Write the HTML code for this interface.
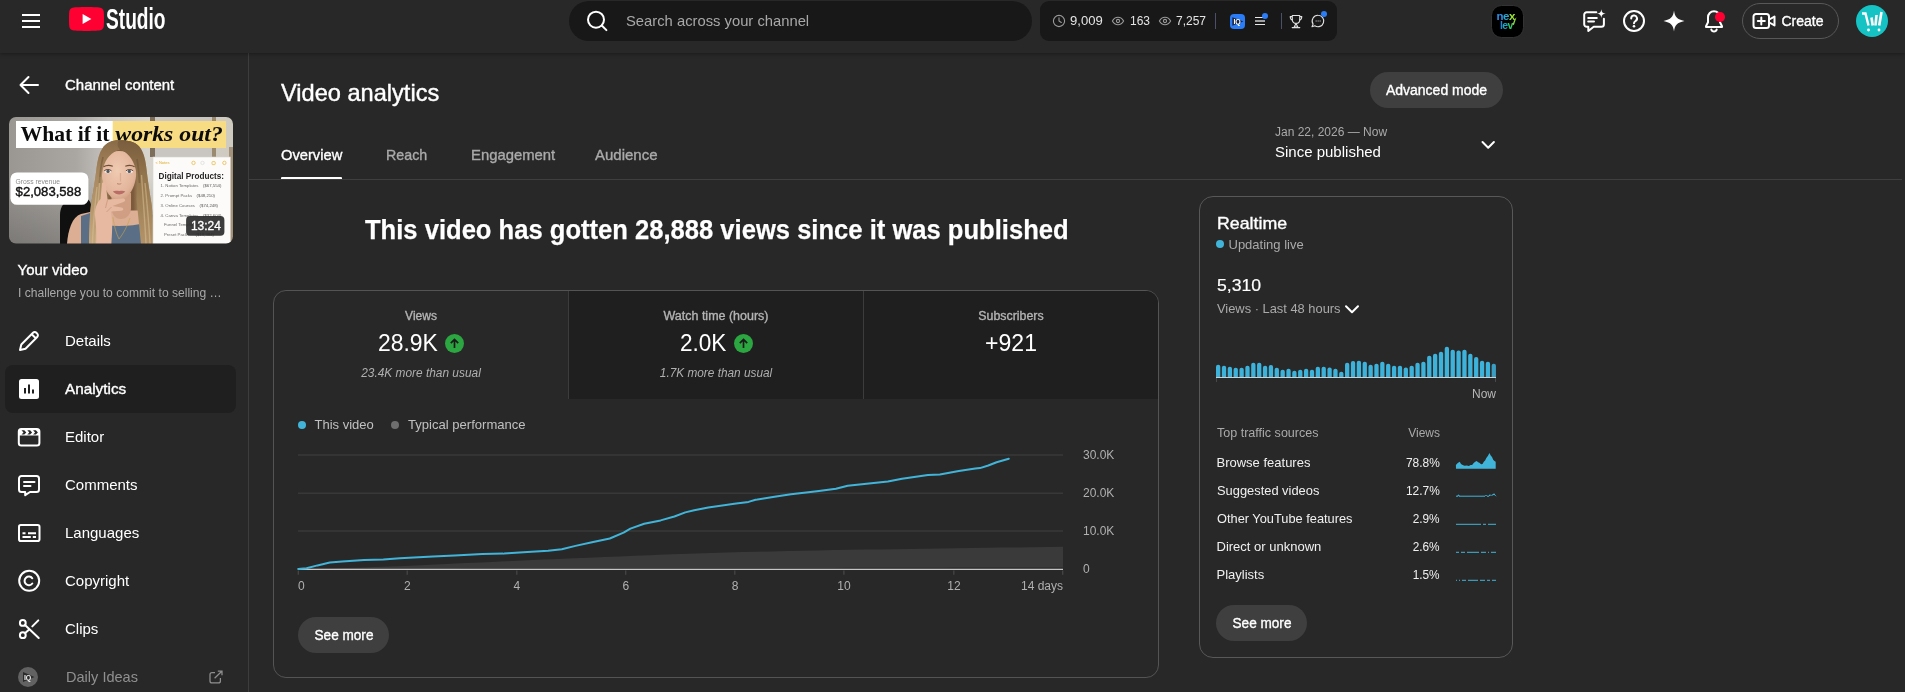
<!DOCTYPE html>
<html lang="en">
<head>
<meta charset="utf-8">
<title>Video analytics - YouTube Studio</title>
<style>
*{box-sizing:border-box;margin:0;padding:0}
html,body{width:1905px;height:692px;overflow:hidden;background:#282828}
body{position:relative;font-family:"Liberation Sans",sans-serif;color:#fff;font-size:15px}
.a{position:absolute}
.t{position:absolute;white-space:nowrap;line-height:1;transform-origin:0 50%;transform:translateY(-50%) scaleX(var(--s,1))}
.r{transform-origin:100% 50%}
.c{transform-origin:50% 50%;transform:translate(-50%,-50%) scaleX(var(--s,1))}
.m{-webkit-text-stroke:.35px currentColor}
.g{color:#aaa}
svg{position:absolute;overflow:visible}
.ic{fill:none;stroke:#fff;stroke-width:2;stroke-linecap:round;stroke-linejoin:round}
/* header */
#hdr{left:0;top:0;width:1905px;height:53px;background:#282828;box-shadow:0 1px 4px rgba(0,0,0,.35);z-index:5}
#search{left:569px;top:1px;width:463px;height:40px;border-radius:20px;background:#181818}
#stats{left:1040px;top:1px;width:297px;height:40px;border-radius:9px;background:#181818}
#create{left:1742px;top:3px;width:97px;height:36px;border-radius:18px;border:1px solid #585858}
#avatar{left:1856px;top:5px;width:32px;height:32px;border-radius:50%;background:#15c2c4}
#nex{left:1490.500px;top:4.500px;width:33px;height:33px;border-radius:10.500px;background:#000;border:1px solid #333}
/* sidebar */
#side{left:0;top:53px;width:249px;height:639px;border-right:1px solid #3d3d3d}
#sel{left:5px;top:365px;width:231px;height:48px;border-radius:8px;background:#1f1f1f}
#thumb{left:9px;top:117px;width:224px;height:126px;border-radius:7px;overflow:hidden;background:#cfcbc6}
/* main */
#divider{left:249px;top:179px;width:1653px;height:1px;background:#3f3f3f}
#uline{left:281px;top:177px;width:61px;height:3px;background:#fff;border-radius:1px}
.pill{position:absolute;height:36px;border-radius:18px;background:#3f3f3f}
#card{left:273px;top:290px;width:886px;height:388px;border:1px solid #545454;border-radius:13px;overflow:hidden}
#rt{left:1199px;top:196px;width:314px;height:462px;border:1px solid #585858;border-radius:14px}
.mt{position:absolute;top:0;height:108px;background:#1f1f1f;border-left:1px solid #3c3c3c}
.dot{position:absolute;width:8px;height:8px;border-radius:50%}
.up{position:absolute;width:19px;height:19px;border-radius:50%;background:#2ba640}
</style>
</head>
<body>
<div id="root" style="position:absolute;left:0;top:0;width:1905px;height:692px;will-change:transform">

<!-- ================= HEADER ================= -->
<div id="hdr" class="a">
  <!-- hamburger -->
  <div class="a" style="left:22px;top:14px;width:18px;height:2px;background:#fff"></div>
  <div class="a" style="left:22px;top:20px;width:18px;height:2px;background:#fff"></div>
  <div class="a" style="left:22px;top:26px;width:18px;height:2px;background:#fff"></div>
  <!-- logo -->
  <svg style="left:69px;top:7px" width="35" height="24" viewBox="0 0 35 24">
    <path d="M17.5 0C10 0 4.6.3 2.9.9 1.6 1.4.7 2.5.4 3.9 0 6 0 9.5 0 12s0 6 .4 8.100c.3 1.4 1.200 2.500 2.500 3C4.600 23.700 10 24 17.500 24s12.900-.3 14.600-.9c1.300-.5 2.200-1.600 2.500-3 .4-2.100.4-5.600.4-8.100s0-6-.4-8.100c-.3-1.400-1.200-2.500-2.500-3C30.400.3 25 0 17.500 0z" fill="#ff0033"/>
    <path d="M13.600 7v10l8.800-5z" fill="#fff"/>
  </svg>
  <div class="t" style="left:106px;top:19px;font-size:29px;font-weight:bold;--s:.66">Studio</div>
  <!-- search -->
  <div id="search" class="a"></div>
  <svg style="left:584px;top:8px" width="24" height="24" viewBox="0 0 24 24"><circle class="ic" cx="12" cy="11.700" r="8"/><path class="ic" d="M17.800 17.500l4.600 4.600"/></svg>
  <div class="t" style="left:626px;top:19.500px;font-size:15px;color:#a8a8a8;--s:.985">Search across your channel</div>
  <!-- vidIQ stats -->
  <div id="stats" class="a"></div>
  <svg style="left:1052px;top:14px" width="14" height="14" viewBox="0 0 14 14"><circle cx="7" cy="7" r="5.600" fill="none" stroke="#9a9a9a" stroke-width="1.100"/><path d="M7 3.800V7l2.300 1.500" fill="none" stroke="#9a9a9a" stroke-width="1.100" stroke-linecap="round"/></svg>
  <div class="t" style="left:1070px;top:20.500px;font-size:12px;color:#e4e4e4;--s:1.09">9,009</div>
  <svg style="left:1111px;top:15px" width="14" height="12" viewBox="0 0 14 12"><path d="M1.400 6C2.700 3.600 4.700 2.300 7 2.300S11.300 3.600 12.600 6C11.300 8.400 9.300 9.700 7 9.700S2.700 8.400 1.400 6z" fill="none" stroke="#9a9a9a" stroke-width="1.100"/><circle cx="7" cy="6" r="1.600" fill="none" stroke="#9a9a9a" stroke-width="1.100"/></svg>
  <div class="t" style="left:1130px;top:20.500px;font-size:12px;color:#e4e4e4">163</div>
  <svg style="left:1158px;top:15px" width="14" height="12" viewBox="0 0 14 12"><path d="M1.400 6C2.700 3.600 4.700 2.300 7 2.300S11.300 3.600 12.600 6C11.300 8.400 9.300 9.700 7 9.700S2.700 8.400 1.400 6z" fill="none" stroke="#9a9a9a" stroke-width="1.100"/><circle cx="7" cy="6" r="1.600" fill="none" stroke="#9a9a9a" stroke-width="1.100"/></svg>
  <div class="t" style="left:1176px;top:20.500px;font-size:12px;color:#e4e4e4">7,257</div>
  <div class="a" style="left:1215px;top:13px;width:1px;height:16px;background:#4a5068"></div>
  <div class="a" style="left:1230px;top:14px;width:15px;height:15px;border-radius:4px;background:#2b7cf7"></div>
  <svg style="left:1230px;top:14px" width="15" height="15" viewBox="0 0 15 15"><path d="M2.300 3.200v8.600L13.400 7.500z" fill="#1c2540"/></svg>
  <div class="t" style="left:1233.500px;top:21.300px;font-size:7px;font-weight:bold;letter-spacing:-.3px">IQ</div>
  <div class="a" style="left:1255px;top:17px;width:10px;height:1px;background:#e8e8e8"></div>
  <div class="a" style="left:1255px;top:20px;width:10px;height:2px;background:#a0a0a0"></div>
  <div class="a" style="left:1255px;top:24px;width:10px;height:1px;background:#e8e8e8"></div>
  <div class="dot" style="left:1262px;top:13px;width:6px;height:6px;background:#2b7cf7"></div>
  <div class="a" style="left:1281px;top:13px;width:1px;height:16px;background:#4a5068"></div>
  <!-- trophy -->
  <svg style="left:1289px;top:14px" width="14" height="15" viewBox="0 0 14 15"><path d="M3.300 1.500h7.400v4.200c0 2.100-1.600 3.700-3.700 3.700S3.300 7.800 3.300 5.700z M3.300 2.600H1.200c0 2.100.7 3.300 2.300 3.600 M10.700 2.600h2.100c0 2.100-.7 3.300-2.300 3.600 M7 9.400l-1.800 3.700h3.600z M3.200 13.600h7.600" fill="none" stroke="#e0e0e0" stroke-width="1.100" stroke-linejoin="round" stroke-linecap="round"/></svg>
  <!-- chat -->
  <svg style="left:1310px;top:13px" width="16" height="16" viewBox="0 0 16 16"><path d="M8.100 2.300a5.700 5.700 0 1 1-3.300 10.400L2 13.700l1.100-2.600A5.700 5.700 0 0 1 8.100 2.300z" fill="none" stroke="#e0e0e0" stroke-width="1.100" stroke-linejoin="round"/><path d="M5.600 8h1.100M7.600 8h1.100M9.600 8h1.100" stroke="#c8c8c8" stroke-width="1.200"/></svg>
  <div class="dot" style="left:1321px;top:11px;width:6px;height:6px;background:#2b7cf7"></div>
  <!-- nexlev -->
  <div id="nex" class="a"></div>
  <div class="t" style="left:1496.500px;top:17px;font-size:11.500px;font-weight:bold;letter-spacing:-.5px;color:#2f8fe6">n<span style="color:#2aa8d0">e</span><span style="color:#9be33a">x</span></div>
  <div class="t" style="left:1500px;top:24.500px;font-size:10.500px;font-weight:bold;letter-spacing:-.6px;color:#2a86d8">l<span style="color:#18a9c9">e</span><span style="color:#35c56a">v</span></div>
  <svg style="left:1491px;top:5px" width="32" height="32" viewBox="0 0 32 32"><path d="M21.500 19.500l2-5 2-2.300-2.600 7.800z" fill="#8fdc3c"/></svg>
  <!-- feedback bubble w/ sparkle -->
  <svg style="left:1581px;top:8px" width="24" height="24" viewBox="0 0 24 24"><path class="ic" d="M15.300 4.300H5.700A2.500 2.500 0 0 0 3.200 6.800v9.400a2.500 2.500 0 0 0 2.500 2.500h1.600v4.300l5.400-4.300h7.700a2.500 2.500 0 0 0 2.500-2.500V10.800"/><path class="ic" d="M7.200 9.900h8.600M7.200 13.600h5.800"/><path d="M20.300 1.200c.4 3 1.400 4 4.400 4.400-3 .4-4 1.400-4.400 4.400-.4-3-1.400-4-4.400-4.400 3-.4 4-1.400 4.400-4.400z" fill="#fff"/></svg>
  <!-- help -->
  <svg style="left:1622px;top:9px" width="24" height="24" viewBox="0 0 24 24"><circle class="ic" cx="12" cy="12" r="10"/><path class="ic" d="M9.200 9.500a2.900 2.900 0 1 1 4.300 2.500c-.9.600-1.500 1.100-1.500 2.300"/><circle cx="12" cy="17.300" r="1.300" fill="#fff"/></svg>
  <!-- sparkle -->
  <svg style="left:1663px;top:10px" width="22" height="22" viewBox="0 0 22 22"><path d="M11 .5c.9 6.600 3 8.700 10.500 10.500C14 12.800 11.900 14.900 11 21.500 10.100 14.900 8 12.800.5 11 8 9.200 10.100 7.100 11 .5z" fill="#fff"/></svg>
  <!-- bell -->
  <svg style="left:1702px;top:9px" width="24" height="24" viewBox="0 0 24 24"><path class="ic" d="M12 2.200c-3.400 0-6 2.700-6 6.100v4.900l-2 4v.8h16v-.8l-2-4V8.300c0-3.400-2.600-6.100-6-6.100z"/><path class="ic" d="M9.300 20.500a2.800 2.800 0 0 0 5.400 0"/></svg>
  <div class="dot" style="left:1715px;top:12px;width:9.500px;height:9.500px;background:#ff0033"></div>
  <!-- create -->
  <div id="create" class="a"></div>
  <svg style="left:1752px;top:9px" width="24" height="24" viewBox="0 0 24 24"><path class="ic" d="M4 5h10.500A2.500 2.500 0 0 1 17 7.500v9a2.500 2.500 0 0 1-2.500 2.500H4a2.500 2.500 0 0 1-2.500-2.500v-9A2.500 2.500 0 0 1 4 5z"/><path class="ic" d="M17.300 10.500L22.500 7.500v9l-5.200-3"/><path class="ic" d="M9.300 8.500v7M5.800 12h7"/></svg>
  <div class="t m" style="left:1781.500px;top:21px;font-size:14px;--s:1">Create</div>
  <!-- avatar -->
  <div id="avatar" class="a"></div>
  <svg style="left:1856px;top:5px" width="32" height="32" viewBox="0 0 32 32"><path d="M6 8.500h3.500l3 12" fill="none" stroke="#fff" stroke-width="2.400"/><path d="M15.500 12.500l1.200 8M20.500 10l-1 10.500M25.500 7l-2.300 13.500" stroke="#fff" stroke-width="2.600" fill="none"/><circle cx="12.500" cy="25" r="1.400" fill="#fff"/><circle cx="23" cy="25" r="1.400" fill="#fff"/></svg>
</div>

<!-- ================= SIDEBAR ================= -->
<div id="side" class="a"></div>
<svg style="left:0;top:0" width="60" height="100" viewBox="0 0 60 100"><path class="ic" d="M38 85H20.500M28.500 77l-8 8 8 8"/></svg>
<div class="t m" style="left:65px;top:84px;font-size:15px">Channel content</div>

<!-- thumbnail -->
<svg style="left:9px;top:117px" width="224" height="127" viewBox="0 0 224 127">
  <defs>
    <clipPath id="tc"><rect x="0" y="0" width="224" height="126.500" rx="7"/></clipPath>
    <linearGradient id="bgw" x1="0" x2="1" y1="0" y2="0"><stop offset="0" stop-color="#9a9793"/><stop offset=".3" stop-color="#aaa7a2"/><stop offset=".44" stop-color="#c6c3be"/><stop offset=".62" stop-color="#d7d4ce"/><stop offset="1" stop-color="#cfcac0"/></linearGradient>
    <linearGradient id="bgd" x1="0" x2="0" y1="0" y2="1"><stop offset="0" stop-color="#000" stop-opacity="0"/><stop offset="1" stop-color="#000" stop-opacity=".2"/></linearGradient>
    <linearGradient id="hair" x1="0" x2="1" y1="0" y2="0"><stop offset="0" stop-color="#8a6c4a"/><stop offset=".18" stop-color="#c4a67c"/><stop offset=".32" stop-color="#80613f"/><stop offset=".68" stop-color="#7a5a3a"/><stop offset=".85" stop-color="#c9ab82"/><stop offset="1" stop-color="#9a7a55"/></linearGradient>
    <linearGradient id="hl" x1="0" x2="0" y1="0" y2="1"><stop offset="0" stop-color="#8a6b48"/><stop offset=".35" stop-color="#a98a60"/><stop offset="1" stop-color="#c6a87e"/></linearGradient>
    <linearGradient id="hr" x1="0" x2="0" y1="0" y2="1"><stop offset="0" stop-color="#7a5d3d"/><stop offset=".4" stop-color="#96784f"/><stop offset="1" stop-color="#b3946a"/></linearGradient>
    <radialGradient id="fsh" cx=".45" cy=".4" r=".7"><stop offset="0" stop-color="#f0cab2"/><stop offset=".7" stop-color="#e2b59b"/><stop offset="1" stop-color="#c99679"/></radialGradient>
    <linearGradient id="skin" x1="0" x2="1" y1="0" y2="0"><stop offset="0" stop-color="#d9a98e"/><stop offset=".5" stop-color="#ecc4ab"/><stop offset="1" stop-color="#d7a78c"/></linearGradient>
  </defs>
  <g clip-path="url(#tc)">
    <rect width="224" height="127" fill="url(#bgw)"/>
    <rect x="0" y="60" width="150" height="67" fill="url(#bgd)"/>
    <rect x="141" y="0" width="5" height="40" fill="#7d6e5c"/>
    <rect x="146" y="0" width="60" height="40" fill="#c9c6c2"/>
    <rect x="203" y="0" width="4" height="40" fill="#9a8a72"/>
    <rect x="220" y="30" width="4" height="97" fill="#a3917a"/>
    <!-- banner -->
    <rect x="7" y="4" width="97" height="27" fill="#fff"/>
    <rect x="103.700" y="4" width="113.300" height="27" fill="#f8dc84"/>
    <g font-family="Liberation Serif, serif" font-size="22" font-weight="bold" fill="#0c0c0c">
      <text x="11.600" y="23.500" textLength="89" lengthAdjust="spacingAndGlyphs">What if it</text>
      <text x="106.300" y="23.500" textLength="107.500" lengthAdjust="spacingAndGlyphs" font-style="italic">works out?</text>
    </g>
    <!-- chair -->
    <path d="M51 127V98c0-9 5-15 13-16h12c4 0 6 3 6 7v38z" fill="#101010"/>
    <!-- hair back -->
    <path d="M110 23.300c-7 0-13 2.500-16.500 8-3.500 5-5 12-6 20-1 9-3 22-5 33-1.600 10-2.500 25-2.500 42.700h65c0-17-1.200-31-2.800-42-1.700-11-3.700-24-4.700-33-1-9-2.500-15.500-6-20.700-3.500-5.500-9.500-8-21.500-8z" fill="url(#hair)"/>
    <!-- shoulders -->
    <path d="M58 127c1-14 5-27 14-30l16-3.500h44l15 4c8 3 11.500 14 12.500 29.500z" fill="#dcae93"/>
    <!-- dress -->
    <path d="M72 127V99l9-3 3 10c8 2 16 3 26 3s18-1 26-3l3-10 8.500 3V127z" fill="#5a6f86"/>
    <!-- neck -->
    <path d="M102.500 76h19.500v15c0 6-4 11-10 11s-9.500-5-9.500-11z" fill="#d09e83"/>
    <!-- face -->
    <path d="M110 34C99 34 93 42 92.700 54c-.2 10 3.300 20 9.300 26 4 3.500 12 3.500 16 0 6-6 9.500-16 9.300-26C127 42 121 34 110 34z" fill="url(#fsh)"/>
    <!-- hair front strands -->
    <path d="M111 32.500c-8 2-14.500 9-17 19-1.800 8-1.500 19-.5 30.500l-4 45h-9.500c0-17.700.9-32.700 2.500-42.700 2-11 4-24 5-33 1-8 2.500-15 6-20 3.500-5.500 9.500-8 16.500-8 3 2 3 6 1 9.200z" fill="url(#hl)"/>
    <path d="M111 32.500c7 2.500 13 9 15.500 19 2 8 2 19 1 30.500l4.500 45h13c0-17-1.200-31-2.800-42-1.700-11-3.700-24-4.700-33-1-9-2.500-15.500-6-20.700-3.500-5.500-9.500-8-21.500-8 -2 3-2 6.500 1 9.200z" fill="url(#hr)"/>
    <path d="M88 70c-2 18-4 36-4.500 57M91 60c-1.500 22-3.500 44-4 67M136 66c2 20 4 40 5 61M132.500 58c1.500 24 3.500 46 4.500 69" stroke="#d8bd94" stroke-width="1.400" fill="none" opacity=".55"/>
    <path d="M94 40c-2 8-3 16-3.500 26M128 42c1.500 8 2 15 2.500 24" stroke="#6a4f35" stroke-width="1.600" fill="none" opacity=".5"/>
    <!-- brows / eyes / nose / lips -->
    <path d="M94.500 49.800c2.500-1.600 6-1.900 9.300-.6M116.300 49.200c3.300-1.300 6.800-1 9.300.6" stroke="#6d4f37" stroke-width="1.200" fill="none"/>
    <ellipse cx="98.800" cy="54.500" rx="3.500" ry="1.700" fill="#f2e6de"/>
    <ellipse cx="120.500" cy="54.500" rx="3.500" ry="1.700" fill="#f2e6de"/>
    <circle cx="99" cy="54.400" r="1.600" fill="#4a5a66"/>
    <circle cx="120.300" cy="54.400" r="1.600" fill="#4a5a66"/>
    <path d="M95.200 53.800c2-1.700 5.300-1.700 7.300 0M116.900 53.800c2-1.700 5.300-1.700 7.300 0" stroke="#4a372b" stroke-width=".9" fill="none"/>
    <path d="M111.500 56v8.500" stroke="#cf9c82" stroke-width="1.200" fill="none" opacity=".6"/>
    <path d="M108 66.500c1 .8 3.300.8 4.300 0" stroke="#b98268" stroke-width="1" fill="none"/>
    <path d="M103.800 74.600c2.200-1.200 4.300-.6 6.300-.6s4.100-.6 6.300.6c-2 2-4.100 2.800-6.300 2.800s-4.300-.8-6.300-2.800z" fill="#b86e66"/>
    <!-- hand -->
    <path d="M93 66c1.500-1.500 3.500-.5 3.800 1.500l1.700 15 15-1c3-.2 3.600 2.500 1 3.500l-11 4 9 1.500c2.500.5 2.300 3-.2 3.200l-10.500.8c2 9 1.500 20 .5 33.500H87c1-10 0-20-1-29-.8-7 2-13 5.500-17z" fill="#e6b9a0"/>
    <path d="M98.500 83l-2 8M102.500 90l-5 5" stroke="#c99277" stroke-width=".7" fill="none"/>
    <!-- necklace -->
    <path d="M104 100c1 9 3 16 6 22 4-5 8-12 11-21" stroke="#c9a24e" stroke-width=".6" fill="none"/>
    <!-- revenue chip -->
    <rect x="1.400" y="55.400" width="78" height="32.400" rx="6.500" fill="#fff"/>
    <text x="6.600" y="67.300" font-family="Liberation Sans, sans-serif" font-size="6.600" fill="#8c8c8c" textLength="44.300" lengthAdjust="spacingAndGlyphs">Gross revenue</text>
    <text x="6.600" y="79.200" font-family="Liberation Sans, sans-serif" font-size="13" fill="#111" stroke="#111" stroke-width=".4" textLength="65.600" lengthAdjust="spacingAndGlyphs">$2,083,588</text>
    <!-- notes card -->
    <rect x="144" y="40" width="77.400" height="87" fill="#fcfbf9"/>
    <rect x="144" y="40" width="77.400" height="87" fill="none" stroke="#d8d4cc" stroke-width=".6"/>
    <g font-family="Liberation Sans, sans-serif">
      <text x="146.500" y="47.300" font-size="4" fill="#e0ab25">&lt; Notes</text>
      <g fill="none" stroke="#e6b432" stroke-width=".7"><circle cx="184.500" cy="45.900" r="1.700"/><circle cx="193.500" cy="45.900" r="1.700" stroke="#d8d8d8"/><rect x="203" y="44.600" width="3.200" height="3" rx=".6"/><circle cx="215.400" cy="45.900" r="1.700"/></g>
      <text x="149.600" y="61.800" font-size="8.700" font-weight="bold" fill="#262626" textLength="65.400" lengthAdjust="spacingAndGlyphs">Digital Products:</text>
      <g font-size="4.300" fill="#6a6a6a">
        <text x="151.600" y="70.300">1. Notion Templates</text><text x="212.400" y="70.300" text-anchor="end" fill="#555">($67,554)</text>
        <text x="151.600" y="79.900">2. Prompt Packs</text><text x="206" y="79.900" text-anchor="end" fill="#555">($48,210)</text>
        <text x="151.600" y="89.900">3. Online Courses</text><text x="209" y="89.900" text-anchor="end" fill="#555">($74,248)</text>
        <text x="151.600" y="99.600">4. Canva Templates</text><text x="212.400" y="99.600" text-anchor="end" fill="#555">($32,604)</text>
        <text x="155" y="109.200">Funnel Templates</text>
        <text x="155" y="118.600">Preset Packs</text><text x="205" y="118.600" text-anchor="end" fill="#555">($19,384)</text>
      </g>
    </g>
    <!-- duration -->
    <rect x="177.100" y="99.100" width="38.300" height="19.600" rx="4" fill="#2b2b2b" fill-opacity=".92"/>
    <text x="181.900" y="113.400" font-family="Liberation Sans, sans-serif" font-size="12" fill="#fff" stroke="#fff" stroke-width=".3" textLength="29.900" lengthAdjust="spacingAndGlyphs">13:24</text>
  </g>
</svg>

<div class="t m" style="left:17.500px;top:269px;font-size:15px">Your video</div>
<div class="t g" style="left:17.500px;top:292.500px;font-size:12px;--s:1.008">I challenge you to commit to selling …</div>
<div id="sel" class="a"></div>

<!-- nav icons -->
<svg style="left:17px;top:329px" width="24" height="24" viewBox="0 0 24 24"><path class="ic" d="M3 21l1.300-5.500L16 3.800a2.400 2.400 0 0 1 3.400 0l.8.800a2.400 2.400 0 0 1 0 3.400L8.500 19.700z M14.700 5.200l4.100 4.100"/></svg>
<svg style="left:17px;top:377px" width="24" height="24" viewBox="0 0 24 24"><rect x="2" y="2" width="20" height="20" rx="2.500" fill="#fff"/><path d="M8 11v5.500M12 7.500v9M16 12.500v4" stroke="#1f1f1f" stroke-width="2" fill="none"/></svg>
<svg style="left:17px;top:425px" width="24" height="24" viewBox="0 0 24 24"><rect class="ic" x="1.800" y="4" width="20.600" height="16.500" rx="2.500"/><path d="M2 4.500h20.200v6H2z" fill="#fff"/><path d="M4.500 5.300l2 2.100-2 2.100h2.800l2-2.100-2-2.100zM10.300 5.300l2 2.100-2 2.100h2.800l2-2.100-2-2.100zM16.100 5.300l2 2.100-2 2.100h2.800l2-2.100-2-2.100z" fill="#282828"/></svg>
<svg style="left:17px;top:473px" width="24" height="24" viewBox="0 0 24 24"><path class="ic" d="M4.500 3h15A2.500 2.500 0 0 1 22 5.500v11a2.500 2.500 0 0 1-2.500 2.500H13l-4.800 3.200V19H4.500A2.500 2.500 0 0 1 2 16.500v-11A2.500 2.500 0 0 1 4.500 3z"/><path class="ic" d="M7 9h10.500M7 13h6.500"/></svg>
<svg style="left:17px;top:521px" width="24" height="24" viewBox="0 0 24 24"><rect class="ic" x="2" y="4" width="20.500" height="16" rx="1.800"/><path d="M5.500 12.200h3M11 12.200h8M5.500 16h8.300M15.800 16h3.200" stroke="#fff" stroke-width="2" fill="none"/></svg>
<svg style="left:17px;top:569px" width="24" height="24" viewBox="0 0 24 24"><circle class="ic" cx="12.200" cy="11.800" r="10"/><path class="ic" d="M15.300 9.300a4.300 4.300 0 1 0 0 5.200"/></svg>
<svg style="left:17px;top:617px" width="24" height="24" viewBox="0 0 24 24"><circle class="ic" cx="5.800" cy="5.900" r="2.900"/><circle class="ic" cx="5.800" cy="18.200" r="2.900"/><path class="ic" d="M8 8l13.700 13M8.200 16.100l4-3.700M15.300 9.400l6-6"/></svg>
<div class="a" style="left:18px;top:667px;width:20px;height:20px;border-radius:50%;background:#626262"></div>
<svg style="left:18px;top:667px" width="20" height="20" viewBox="0 0 20 20"><path d="M5 5v10l11.500-5z" fill="#2a2a2a"/></svg>
<div class="t" style="left:24px;top:677.300px;font-size:7px;font-weight:bold;letter-spacing:-.2px;color:#f0f0f0">IQ</div>
<svg style="left:205px;top:667px" width="20" height="20" viewBox="0 0 20 20"><path d="M10 5.500H7A2 2 0 0 0 5 7.500v6.400a2 2 0 0 0 2 2h6.400a2 2 0 0 0 2-2V11" fill="none" stroke="#8e8e8e" stroke-width="1.250"/><path d="M9.600 11.300L16.800 4.300M12.800 4.100h4.200v4.200" fill="none" stroke="#8e8e8e" stroke-width="1.250"/></svg>

<div class="t" style="left:65px;top:340px">Details</div>
<div class="t m" style="left:65px;top:388px;--s:1.02">Analytics</div>
<div class="t" style="left:65px;top:436px">Editor</div>
<div class="t" style="left:65px;top:484px">Comments</div>
<div class="t" style="left:65px;top:532px">Languages</div>
<div class="t" style="left:65px;top:580px">Copyright</div>
<div class="t" style="left:65px;top:628px">Clips</div>
<div class="t" style="left:66px;top:676px;color:#909090;--s:.97">Daily Ideas</div>

<!-- ================= MAIN ================= -->
<div class="t m" style="left:281px;top:93px;font-size:24px;-webkit-text-stroke:.4px #fff;--s:.983">Video analytics</div>
<div class="t m" style="left:281px;top:153.500px;--s:.98">Overview</div>
<div class="t m g" style="left:386px;top:153.500px;--s:.95">Reach</div>
<div class="t m g" style="left:470.500px;top:153.500px;--s:.99">Engagement</div>
<div class="t m g" style="left:595px;top:153.500px">Audience</div>
<div id="uline" class="a"></div>
<div id="divider" class="a"></div>
<div class="pill" style="left:1370px;top:72px;width:133px"></div>
<div class="t m c" style="left:1436.500px;top:90px;font-size:14px">Advanced mode</div>
<div class="t g" style="left:1275px;top:132px;font-size:12px">Jan 22, 2026 — Now</div>
<div class="t" style="left:1275px;top:151px">Since published</div>
<svg style="left:1476px;top:133px" width="24" height="24" viewBox="0 0 24 24"><path class="ic" d="M6.500 9l5.700 5.700L17.900 9"/></svg>

<div class="t" style="left:364.500px;top:230px;font-size:28px;font-weight:bold;-webkit-text-stroke:.25px #fff;--s:.9135">This video has gotten 28,888 views since it was published</div>

<!-- metrics + chart card -->
<div id="card" class="a">
  <div class="mt" style="left:294px;width:295px"></div>
  <div class="mt" style="left:589px;width:296px"></div>
</div>
<div class="t m c" style="left:421px;top:316px;font-size:12px;color:#b4b4b4">Views</div>
<div class="t" style="left:378px;top:343px;font-size:24px;--s:.955">28.9K</div>
<div class="up" style="left:444.500px;top:333.500px"></div>
<svg style="left:444.500px;top:333.500px" width="19" height="19" viewBox="0 0 19 19"><path d="M9.500 14V5.600M5.800 9.200l3.700-3.700 3.700 3.700" fill="none" stroke="#1a1a1a" stroke-width="1.700"/></svg>
<div class="t c" style="left:421px;top:373px;font-size:12px;font-style:italic;color:#b0b0b0;--s:.99">23.4K more than usual</div>

<div class="t m c" style="left:716px;top:316px;font-size:12px;color:#b4b4b4;--s:1.04">Watch time (hours)</div>
<div class="t" style="left:680px;top:343px;font-size:24px;--s:.94">2.0K</div>
<div class="up" style="left:733.500px;top:333.500px"></div>
<svg style="left:733.500px;top:333.500px" width="19" height="19" viewBox="0 0 19 19"><path d="M9.500 14V5.600M5.800 9.200l3.700-3.700 3.700 3.700" fill="none" stroke="#1a1a1a" stroke-width="1.700"/></svg>
<div class="t c" style="left:716px;top:373px;font-size:12px;font-style:italic;color:#b0b0b0;--s:.985">1.7K more than usual</div>

<div class="t m c" style="left:1011px;top:316px;font-size:12px;color:#b4b4b4;--s:1.03">Subscribers</div>
<div class="t c" style="left:1010.500px;top:343px;font-size:24px;--s:.96">+921</div>

<!-- legend -->
<div class="dot" style="left:298px;top:421px;background:#41b4d9"></div>
<div class="t" style="left:314.500px;top:423.500px;font-size:13px;color:#c0c0c0">This video</div>
<div class="dot" style="left:391px;top:421px;background:#6e6e6e"></div>
<div class="t" style="left:407.500px;top:423.500px;font-size:13px;color:#c0c0c0;--s:1.005">Typical performance</div>

<!-- chart -->
<svg style="left:0;top:0" width="1905" height="692" viewBox="0 0 1905 692" font-family="Liberation Sans, sans-serif" font-size="12" fill="#b0b0b0">
  <path d="M298 455H1063M298 493.200H1063M298 531.100H1063" stroke="#383838" stroke-width="1.500"/>
  <path d="M298.0 569.0 L313.3 568.7 L328.6 568.4 L343.9 568.1 L359.2 567.7 L374.5 567.1 L389.8 566.5 L405.1 565.9 L420.4 565.2 L435.7 564.5 L451.0 563.8 L466.3 563.1 L481.6 562.4 L496.9 561.7 L512.2 560.9 L527.5 560.3 L542.8 559.6 L558.1 558.9 L573.4 558.3 L588.7 557.7 L604.0 557.0 L619.3 556.4 L634.6 555.8 L649.9 555.2 L665.2 554.6 L680.5 554.0 L695.8 553.4 L711.1 553.0 L726.4 552.6 L741.7 552.1 L757.0 551.7 L772.3 551.4 L787.6 551.0 L802.9 550.7 L818.2 550.4 L833.5 550.1 L848.8 549.8 L864.1 549.6 L879.4 549.4 L894.7 549.2 L910.0 548.9 L925.3 548.7 L940.6 548.5 L955.9 548.3 L971.2 548.1 L986.5 547.8 L1001.8 547.6 L1017.1 547.4 L1032.4 547.2 L1047.7 547.0 L1063.0 546.8 L1063.0 567.4 L1047.7 567.4 L1032.4 567.5 L1017.1 567.5 L1001.8 567.5 L986.5 567.6 L971.2 567.6 L955.9 567.6 L940.6 567.7 L925.3 567.7 L910.0 567.7 L894.7 567.8 L879.4 567.8 L864.1 567.8 L848.8 567.8 L833.5 567.9 L818.2 567.9 L802.9 567.9 L787.6 568.0 L772.3 568.0 L757.0 568.0 L741.7 568.1 L726.4 568.1 L711.1 568.1 L695.8 568.2 L680.5 568.2 L665.2 568.2 L649.9 568.3 L634.6 568.3 L619.3 568.3 L604.0 568.4 L588.7 568.4 L573.4 568.4 L558.1 568.5 L542.8 568.5 L527.5 568.5 L512.2 568.6 L496.9 568.6 L481.6 568.6 L466.3 568.6 L451.0 568.7 L435.7 568.7 L420.4 568.7 L405.1 568.8 L389.8 568.8 L374.5 568.8 L359.2 568.9 L343.9 568.9 L328.6 568.9 L313.3 569.0 L298.0 569.0Z" fill="#3a3a3a"/>
  <path d="M298 569.400H1063" stroke="#c6c6c6" stroke-width="1.100"/>
  <path d="M298.300 570.500v4.300M407.200 570.500v4.300M516.800 570.500v4.300M625.700 570.500v4.300M734.800 570.500v4.300M843.900 570.500v4.300M953.800 570.500v4.300M1062.700 570.500v4.300" stroke="#464646" stroke-width="1.300"/>
  <path d="M298.2 569.0 L306.5 568.2 L317.5 565.4 L329.8 562.6 L342.2 561.5 L364.1 559.9 L383.3 559.6 L399.8 558.3 L432.8 556.6 L454.7 555.5 L482.2 554.1 L504.1 553.6 L523.4 552.2 L548.1 550.8 L561.8 549.2 L575.5 545.9 L592.0 542.3 L609.8 538.5 L623.6 532.7 L630.4 528.6 L644.2 523.7 L660.6 520.4 L674.4 516.5 L685.3 512.4 L694.2 510.2 L708.3 507.6 L734.3 503.8 L748.5 501.9 L755.6 499.8 L774.5 496.7 L791.0 494.3 L817.0 491.3 L835.9 488.7 L847.7 485.8 L869.0 483.5 L887.9 481.6 L902.0 478.7 L928.0 475.0 L939.9 474.5 L958.8 470.9 L975.3 468.6 L980.0 468.1 L988.3 465.5 L996.6 462.2 L1008.8 458.7" fill="none" stroke="#41b4d9" stroke-width="2" stroke-linejoin="round" stroke-linecap="round"/>
  <text x="298" y="590.300">0</text>
  <text x="407.300" y="590.300" text-anchor="middle">2</text>
  <text x="516.800" y="590.300" text-anchor="middle">4</text>
  <text x="625.800" y="590.300" text-anchor="middle">6</text>
  <text x="735" y="590.300" text-anchor="middle">8</text>
  <text x="844" y="590.300" text-anchor="middle">10</text>
  <text x="954" y="590.300" text-anchor="middle">12</text>
  <text x="1063" y="590.300" text-anchor="end">14 days</text>
  <text x="1083" y="459">30.0K</text>
  <text x="1083" y="497">20.0K</text>
  <text x="1083" y="535">10.0K</text>
  <text x="1083" y="573">0</text>
</svg>
<div class="pill" style="left:298px;top:617px;width:91px"></div>
<div class="t m c" style="left:343.500px;top:635px;font-size:14px;--s:.97">See more</div>

<!-- realtime card -->
<div id="rt" class="a"></div>
<div class="t m" style="left:1216.500px;top:222.500px;font-size:17px;--s:1.045">Realtime</div>
<div class="dot" style="left:1216px;top:240px;background:#41b4d9"></div>
<div class="t g" style="left:1228.500px;top:243.500px;font-size:13px">Updating live</div>
<div class="t m" style="left:1216.500px;top:285px;font-size:17px;-webkit-text-stroke:.2px #fff;--s:1.035">5,310</div>
<div class="t g" style="left:1216.500px;top:308px;font-size:13px;--s:.99">Views · Last 48 hours</div>
<svg style="left:1340px;top:297px" width="24" height="24" viewBox="0 0 24 24"><path class="ic" d="M6 9.300l6 6 6-6"/></svg>
<svg style="left:0;top:0" width="1905" height="692" viewBox="0 0 1905 692">
  <path d="M1216.00 377V366.7a2 2 0 0 1 2-2h0.3a2 2 0 0 1 2 2V377z" fill="#3db3db"/><path d="M1221.86 377V367.7a2 2 0 0 1 2-2h0.3a2 2 0 0 1 2 2V377z" fill="#3db3db"/><path d="M1227.73 377V368.8a2 2 0 0 1 2-2h0.3a2 2 0 0 1 2 2V377z" fill="#3db3db"/><path d="M1233.59 377V369.8a2 2 0 0 1 2-2h0.3a2 2 0 0 1 2 2V377z" fill="#3db3db"/><path d="M1239.46 377V369.8a2 2 0 0 1 2-2h0.3a2 2 0 0 1 2 2V377z" fill="#3db3db"/><path d="M1245.32 377V367.7a2 2 0 0 1 2-2h0.3a2 2 0 0 1 2 2V377z" fill="#3db3db"/><path d="M1251.19 377V364.8a2 2 0 0 1 2-2h0.3a2 2 0 0 1 2 2V377z" fill="#3db3db"/><path d="M1257.05 377V364.8a2 2 0 0 1 2-2h0.3a2 2 0 0 1 2 2V377z" fill="#3db3db"/><path d="M1262.92 377V367.7a2 2 0 0 1 2-2h0.3a2 2 0 0 1 2 2V377z" fill="#3db3db"/><path d="M1268.78 377V366.9a2 2 0 0 1 2-2h0.3a2 2 0 0 1 2 2V377z" fill="#3db3db"/><path d="M1274.65 377V369.8a2 2 0 0 1 2-2h0.3a2 2 0 0 1 2 2V377z" fill="#3db3db"/><path d="M1280.51 377V371.7a2 2 0 0 1 2-2h0.3a2 2 0 0 1 2 2V377z" fill="#3db3db"/><path d="M1286.38 377V370.7a2 2 0 0 1 2-2h0.3a2 2 0 0 1 2 2V377z" fill="#3db3db"/><path d="M1292.24 377V372.8a2 2 0 0 1 2-2h0.3a2 2 0 0 1 2 2V377z" fill="#3db3db"/><path d="M1298.10 377V371.7a2 2 0 0 1 2-2h0.3a2 2 0 0 1 2 2V377z" fill="#3db3db"/><path d="M1303.97 377V370.7a2 2 0 0 1 2-2h0.3a2 2 0 0 1 2 2V377z" fill="#3db3db"/><path d="M1309.83 377V371.7a2 2 0 0 1 2-2h0.3a2 2 0 0 1 2 2V377z" fill="#3db3db"/><path d="M1315.70 377V368.8a2 2 0 0 1 2-2h0.3a2 2 0 0 1 2 2V377z" fill="#3db3db"/><path d="M1321.56 377V368.8a2 2 0 0 1 2-2h0.3a2 2 0 0 1 2 2V377z" fill="#3db3db"/><path d="M1327.43 377V369.6a2 2 0 0 1 2-2h0.3a2 2 0 0 1 2 2V377z" fill="#3db3db"/><path d="M1333.29 377V370.7a2 2 0 0 1 2-2h0.3a2 2 0 0 1 2 2V377z" fill="#3db3db"/><path d="M1339.16 377V373.8a2 2 0 0 1 2-2h0.3a2 2 0 0 1 2 2V377z" fill="#3db3db"/><path d="M1345.02 377V364.8a2 2 0 0 1 2-2h0.3a2 2 0 0 1 2 2V377z" fill="#3db3db"/><path d="M1350.89 377V362.9a2 2 0 0 1 2-2h0.3a2 2 0 0 1 2 2V377z" fill="#3db3db"/><path d="M1356.75 377V362.7a2 2 0 0 1 2-2h0.3a2 2 0 0 1 2 2V377z" fill="#3db3db"/><path d="M1362.61 377V363.7a2 2 0 0 1 2-2h0.3a2 2 0 0 1 2 2V377z" fill="#3db3db"/><path d="M1368.48 377V366.7a2 2 0 0 1 2-2h0.3a2 2 0 0 1 2 2V377z" fill="#3db3db"/><path d="M1374.34 377V365.8a2 2 0 0 1 2-2h0.3a2 2 0 0 1 2 2V377z" fill="#3db3db"/><path d="M1380.21 377V363.7a2 2 0 0 1 2-2h0.3a2 2 0 0 1 2 2V377z" fill="#3db3db"/><path d="M1386.07 377V365.8a2 2 0 0 1 2-2h0.3a2 2 0 0 1 2 2V377z" fill="#3db3db"/><path d="M1391.94 377V367.7a2 2 0 0 1 2-2h0.3a2 2 0 0 1 2 2V377z" fill="#3db3db"/><path d="M1397.80 377V367.7a2 2 0 0 1 2-2h0.3a2 2 0 0 1 2 2V377z" fill="#3db3db"/><path d="M1403.67 377V369.6a2 2 0 0 1 2-2h0.3a2 2 0 0 1 2 2V377z" fill="#3db3db"/><path d="M1409.53 377V367.7a2 2 0 0 1 2-2h0.3a2 2 0 0 1 2 2V377z" fill="#3db3db"/><path d="M1415.40 377V364.8a2 2 0 0 1 2-2h0.3a2 2 0 0 1 2 2V377z" fill="#3db3db"/><path d="M1421.26 377V363.7a2 2 0 0 1 2-2h0.3a2 2 0 0 1 2 2V377z" fill="#3db3db"/><path d="M1427.12 377V357.8a2 2 0 0 1 2-2h0.3a2 2 0 0 1 2 2V377z" fill="#3db3db"/><path d="M1432.99 377V355.8a2 2 0 0 1 2-2h0.3a2 2 0 0 1 2 2V377z" fill="#3db3db"/><path d="M1438.85 377V353.7a2 2 0 0 1 2-2h0.3a2 2 0 0 1 2 2V377z" fill="#3db3db"/><path d="M1444.72 377V348.8a2 2 0 0 1 2-2h0.3a2 2 0 0 1 2 2V377z" fill="#3db3db"/><path d="M1450.58 377V351.8a2 2 0 0 1 2-2h0.3a2 2 0 0 1 2 2V377z" fill="#3db3db"/><path d="M1456.45 377V352.6a2 2 0 0 1 2-2h0.3a2 2 0 0 1 2 2V377z" fill="#3db3db"/><path d="M1462.31 377V351.8a2 2 0 0 1 2-2h0.3a2 2 0 0 1 2 2V377z" fill="#3db3db"/><path d="M1468.18 377V355.8a2 2 0 0 1 2-2h0.3a2 2 0 0 1 2 2V377z" fill="#3db3db"/><path d="M1474.04 377V358.9a2 2 0 0 1 2-2h0.3a2 2 0 0 1 2 2V377z" fill="#3db3db"/><path d="M1479.91 377V362.7a2 2 0 0 1 2-2h0.3a2 2 0 0 1 2 2V377z" fill="#3db3db"/><path d="M1485.77 377V363.7a2 2 0 0 1 2-2h0.3a2 2 0 0 1 2 2V377z" fill="#3db3db"/><path d="M1491.64 377V365.8a2 2 0 0 1 2-2h0.3a2 2 0 0 1 2 2V377z" fill="#3a9fc2"/>
  <path d="M1216 377.500H1496" stroke="#cfcfcf" stroke-width="1"/>
  <path d="M1216.500 378v4M1495.500 378v4" stroke="#484848" stroke-width="1"/>
  <path d="M1456 468.7 L1455.9 464.9 L1457.2 463.4 L1458.5 462.6 L1459.7 461.8 L1461.0 463.9 L1462.6 464.9 L1464.7 465.7 L1466.8 465.5 L1468.9 465.9 L1470.6 465.1 L1472.1 464.9 L1473.7 463.0 L1475.2 461.8 L1476.7 460.9 L1478.1 462.2 L1479.4 462.8 L1481.1 464.3 L1482.5 463.9 L1483.8 461.8 L1485.1 460.5 L1486.3 458.0 L1487.8 455.9 L1489.5 453.0 L1490.7 455.5 L1492.0 457.1 L1493.2 459.7 L1494.5 460.9 L1495.7 461.8 L1495.7 468.7Z" fill="#41b4d9"/>
  <path d="M1456 496.200h2v-1h1v1h26l1-1 1 1h2l1-1.500 1 1 1-1 1 .5 1-1.500 1 1.500 1 1" fill="none" stroke="#41b4d9" stroke-width="1"/>
  <path d="M1456 524.300h25M1483 524.300h3M1488 524.300h8" stroke="#41b4d9" stroke-width="1"/>
  <path d="M1456 552.300h3M1461 552.300h4M1467 552.300h12M1481 552.300h5M1488 552.300h1M1491 552.300h5" stroke="#41b4d9" stroke-width="1"/>
  <path d="M1456 580.300h1M1459 580.300h1M1462 580.300h4M1468 580.300h10M1480 580.300h5M1487 580.300h3M1492 580.300h4" stroke="#41b4d9" stroke-width="1"/>
</svg>
<div class="t r" style="right:409px;top:394px;font-size:12px;color:#b8b8b8">Now</div>
<div class="t g" style="left:1216.500px;top:433px;font-size:12px;--s:1.045">Top traffic sources</div>
<div class="t g r" style="right:465px;top:433px;font-size:12px">Views</div>
<div class="t" style="left:1216.500px;top:461.5px;font-size:13px;color:#f0f0f0;--s:1">Browse features</div>
<div class="t r" style="right:465px;top:461.5px;font-size:13px;color:#f0f0f0;--s:0.92">78.8%</div>
<div class="t" style="left:1216.500px;top:489.5px;font-size:13px;color:#f0f0f0;--s:0.99">Suggested videos</div>
<div class="t r" style="right:465px;top:489.5px;font-size:13px;color:#f0f0f0;--s:0.92">12.7%</div>
<div class="t" style="left:1216.500px;top:517.5px;font-size:13px;color:#f0f0f0;--s:0.985">Other YouTube features</div>
<div class="t r" style="right:465px;top:517.5px;font-size:13px;color:#f0f0f0;--s:0.91">2.9%</div>
<div class="t" style="left:1216.500px;top:545.5px;font-size:13px;color:#f0f0f0;--s:1">Direct or unknown</div>
<div class="t r" style="right:465px;top:545.5px;font-size:13px;color:#f0f0f0;--s:0.91">2.6%</div>
<div class="t" style="left:1216.500px;top:573.5px;font-size:13px;color:#f0f0f0;--s:1">Playlists</div>
<div class="t r" style="right:465px;top:573.5px;font-size:13px;color:#f0f0f0;--s:0.91">1.5%</div>
<div class="pill" style="left:1216px;top:605px;width:91px"></div>
<div class="t m c" style="left:1261.500px;top:623px;font-size:14px;--s:.97">See more</div>

</div>
</body>
</html>
